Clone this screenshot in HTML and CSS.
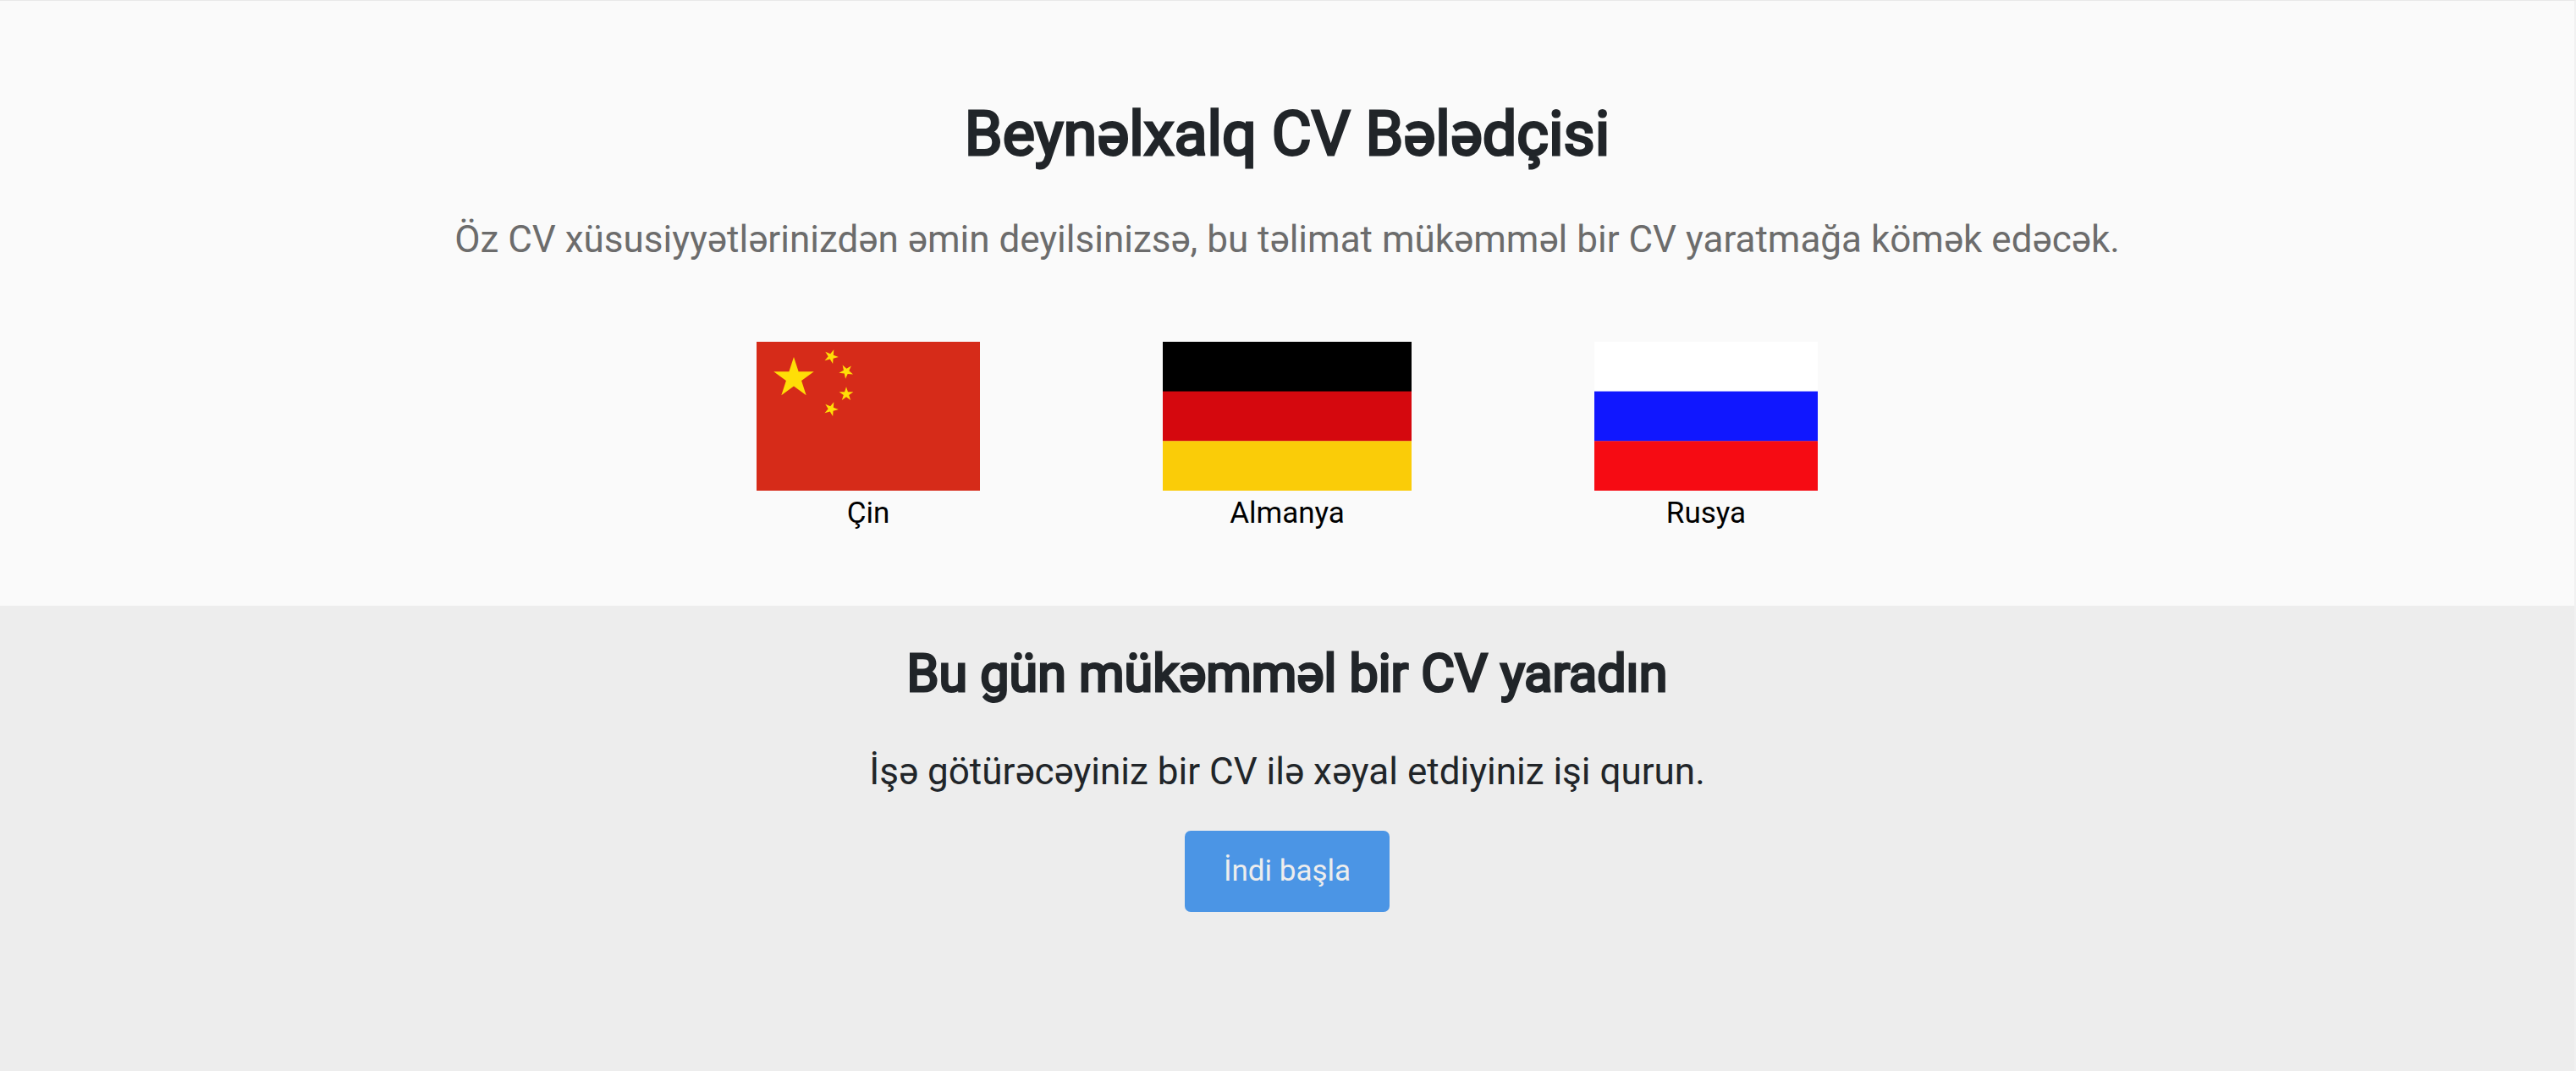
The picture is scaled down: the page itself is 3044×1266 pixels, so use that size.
FILE: index.html
```html
<!DOCTYPE html>
<html lang="az">
<head>
<meta charset="utf-8">
<meta name="viewport" content="width=device-width, initial-scale=1">
<title>Beynəlxalq CV Bələdçisi</title>
<link rel="stylesheet" href="styles.css">
</head>
<body>
<main class="page">
  <section class="guide">
    <h1 class="guide-title">Beynəlxalq CV Bələdçisi</h1>
    <p class="guide-text">Öz CV xüsusiyyətlərinizdən əmin deyilsinizsə, bu təlimat mükəmməl bir CV yaratmağa kömək edəcək.</p>
    <nav class="countries" aria-label="Ölkələr">
      <a class="country" href="#china">
        <svg class="flag" width="264" height="176" viewBox="0 0 264 176" aria-hidden="true">
          <defs>
            <path id="star" d="M0-1 .2245-.309 .9511-.309 .3633.118 .5878.809 0 .382-.5878.809-.3633.118-.9511-.309-.2245-.309Z"/>
          </defs>
          <rect width="264" height="176" fill="#d62b19"/>
          <g fill="#ffde07">
            <use href="#star" transform="translate(44 43) scale(25)"/>
            <use href="#star" transform="translate(88 17.5) rotate(22) scale(8.8)"/>
            <use href="#star" transform="translate(106 35) rotate(42) scale(8.8)"/>
            <use href="#star" transform="translate(106 62) scale(8.8)"/>
            <use href="#star" transform="translate(88 79.5) rotate(22) scale(8.8)"/>
          </g>
        </svg>
        <span>Çin</span>
      </a>
      <a class="country" href="#germany">
        <svg class="flag" width="294" height="176" viewBox="0 0 294 176" aria-hidden="true">
          <rect width="294" height="59" fill="#000"/>
          <rect y="58.6" width="294" height="59" fill="#d5080e"/>
          <rect y="117.3" width="294" height="58.7" fill="#facc08"/>
        </svg>
        <span>Almanya</span>
      </a>
      <a class="country" href="#russia">
        <svg class="flag" width="264" height="176" viewBox="0 0 264 176" aria-hidden="true">
          <rect width="264" height="59" fill="#fff"/>
          <rect y="58.6" width="264" height="59" fill="#1017ff"/>
          <rect y="117.3" width="264" height="58.7" fill="#f60b13"/>
        </svg>
        <span>Rusya</span>
      </a>
    </nav>
  </section>
  <section class="start">
    <h2 class="start-title">Bu gün mükəmməl bir CV yaradın</h2>
    <p class="start-text">İşə götürəcəyiniz bir CV ilə xəyal etdiyiniz işi qurun.</p>
    <button class="start-button" type="button">İndi başla</button>
  </section>
</main>
</body>
</html>
```
FILE: styles.css
```css
* {
  box-sizing: border-box;
}

body {
  margin: 0;
  font-family: Roboto, "Noto Sans", sans-serif;
  color: #212529;
  background: #ededed;
}

h1, h2, p {
  margin: 0;
  font-weight: 400;
}

.page {
  display: flex;
  flex-direction: column;
  min-height: 100vh;
  border-top: 1px solid #e8e8e8;
  border-right: 2px solid #f1f1f1;
  text-align: center;
}

.guide {
  display: flex;
  flex-direction: column;
  align-items: center;
  padding: 112px 32px 82px;
  background: #fafafa;
}

.guide-title {
  font-size: 72px;
  line-height: 92px;
  -webkit-text-stroke: 3px;
}

.guide-text {
  margin-top: 51px;
  font-size: 44px;
  line-height: 54px;
  color: #6c6c6c;
}

.countries {
  display: flex;
  flex-wrap: wrap;
  justify-content: center;
  gap: 216px;
  margin-top: 94px;
}

.country {
  display: flex;
  flex-direction: column;
  align-items: center;
  font-size: 35px;
  line-height: 54px;
  color: #000;
  text-decoration: none;
}

.flag {
  display: block;
}

.start {
  display: flex;
  flex: 1;
  flex-direction: column;
  align-items: center;
  padding: 40px 32px;
}

.start-title {
  font-size: 61px;
  line-height: 80px;
  -webkit-text-stroke: 3px;
}

.start-text {
  margin-top: 49px;
  font-size: 44px;
  line-height: 54px;
}

.start-button {
  margin-top: 43px;
  padding: 20px 46px;
  border: 0;
  border-radius: 7px;
  font-family: inherit;
  font-size: 35px;
  line-height: 56px;
  color: #ededed;
  background: #4b95e5;
}
```
